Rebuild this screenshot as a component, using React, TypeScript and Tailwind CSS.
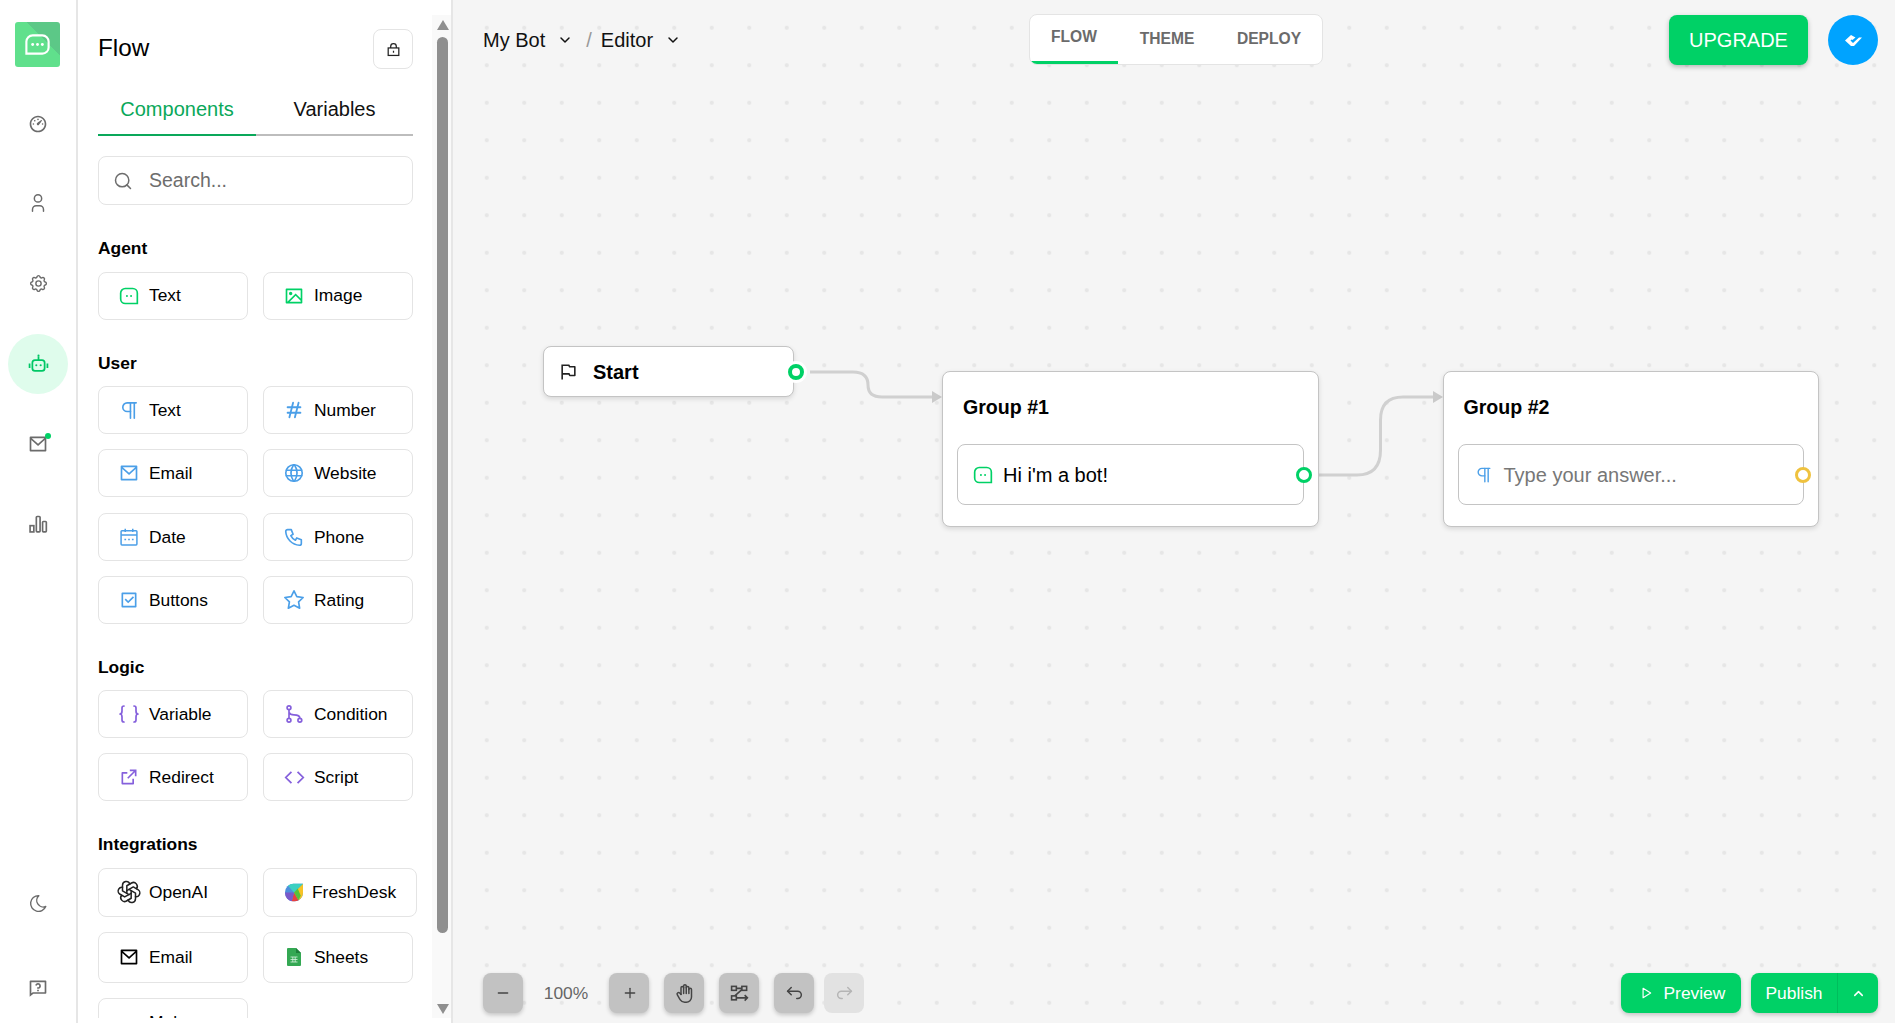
import type { ReactNode } from "react";
import { Pilcrow, Search } from "lucide-react";
import {
  RiCheckboxLine,
  RiDashboard3Line,
  RiExternalLinkLine,
  RiFlagLine,
  RiImageLine,
  RiMailLine,
  RiQuestionnaireLine,
} from "react-icons/ri";
import {
  TbArrowBackUp,
  TbArrowForwardUp,
  TbBraces,
  TbBrandOpenai,
  TbChevronDown,
  TbChevronUp,
  TbHandStop,
  TbHash,
  TbMinus,
  TbMoon,
  TbPhone,
  TbPlayerPlay,
  TbPlus,
  TbSettings,
  TbStar,
  TbUser,
  TbWorld,
} from "react-icons/tb";

function Bubble({ className }: { className?: string }) {
  return (
    <svg viewBox="0 0 24 24" fill="none" stroke="currentColor" strokeWidth="2" className={className}>
      <path d="M7.500 3h9a5.500 5.500 0 0 1 5.500 5.500V21H7.500A5.500 5.500 0 0 1 2 15.500V8.500A5.500 5.500 0 0 1 7.500 3z" />
      <circle cx="9.500" cy="12" r="1.200" fill="currentColor" stroke="none" />
      <circle cx="14.500" cy="12" r="1.200" fill="currentColor" stroke="none" />
    </svg>
  );
}

function Robot({ className }: { className?: string }) {
  return (
    <svg viewBox="0 0 24 24" fill="none" stroke="currentColor" strokeWidth="2" className={className}>
      <rect x="5" y="8" width="14" height="12.500" rx="3" />
      <path d="M12 8V4M1.800 12v5M22.200 12v5" />
      <circle cx="12" cy="3" r="1.200" fill="currentColor" stroke="none" />
      <circle cx="9.500" cy="14" r="1.200" fill="currentColor" stroke="none" />
      <circle cx="14.500" cy="14" r="1.200" fill="currentColor" stroke="none" />
    </svg>
  );
}

function BarsIcon({ className }: { className?: string }) {
  return (
    <svg viewBox="0 0 24 24" fill="none" stroke="currentColor" strokeWidth="2" className={className}>
      <rect x="2.500" y="14" width="4.500" height="7.500" />
      <rect x="10" y="3" width="4.500" height="18.500" rx="1" />
      <rect x="17.500" y="9" width="4.500" height="12.500" rx="1" />
    </svg>
  );
}

function CalendarIcon({ className }: { className?: string }) {
  return (
    <svg viewBox="0 0 24 24" fill="none" stroke="currentColor" strokeWidth="1.800" className={className}>
      <rect x="2.500" y="4.500" width="19" height="17" rx="1" />
      <path d="M2.500 9.500h19M7.500 2v4M16.500 2v4" />
      <path d="M6.500 15h2M11 15h2M15.500 15h2" strokeWidth="1.600" />
    </svg>
  );
}

function ConditionIcon({ className }: { className?: string }) {
  return (
    <svg viewBox="0 0 24 24" fill="none" stroke="currentColor" strokeWidth="2" className={className}>
      <circle cx="6" cy="4.500" r="2.300" />
      <circle cx="6" cy="19.500" r="2.300" />
      <circle cx="19" cy="19.500" r="2.300" />
      <path d="M6 7v10M6 10c1 2.500 3 3 6 3 3.500 0 7 0 7 4" />
    </svg>
  );
}

function ChevronsCode({ className }: { className?: string }) {
  return (
    <svg viewBox="0 0 24 24" fill="none" stroke="currentColor" strokeWidth="2" className={className}>
      <path d="M8.500 5.500L2 12l6.500 6.500M15.500 5.500L22 12l-6.500 6.500" />
    </svg>
  );
}

function LockIcon({ className }: { className?: string }) {
  return (
    <svg viewBox="0 0 24 24" fill="none" stroke="currentColor" strokeWidth="2" className={className}>
      <rect x="3.500" y="9.500" width="17" height="12" />
      <path d="M7.500 9.500V7a4.500 4.500 0 0 1 9 0v2.500M12 14v3" />
    </svg>
  );
}

function FreshDesk() {
  return (
    <svg viewBox="0 0 24 24" className="h-[19px] w-[18px] shrink-0" preserveAspectRatio="none">
      <path d="M11 1h13v11a11 11 0 0 1-11 11H11A11 11 0 0 1 0 12a11 11 0 0 1 11-11z" fill="#4d8fdc" />
      <path d="M12 12L24 1v11a11 11 0 0 1-6 9.800z" fill="#f7c325" />
      <path d="M12 12l6 9.800A11 11 0 0 1 13 23H9z" fill="#e8403f" />
      <path d="M12 12L24 1H11a11 11 0 0 0-7 2.600z" fill="#3bd0c2" />
      <path d="M12 12l5-5 4 9-3 5.800z" fill="#56c23b" />
      <path d="M12 12L0 12a11 11 0 0 0 9 11z" fill="#7a59c9" />
    </svg>
  );
}

function SheetsIcon() {
  return (
    <svg viewBox="0 0 14 18" className="h-[18px] w-[14px] shrink-0">
      <path d="M1 0h8l5 5v12a1 1 0 0 1-1 1H1a1 1 0 0 1-1-1V1a1 1 0 0 1 1-1z" fill="#34a853" />
      <path d="M9 0l5 5H9z" fill="#1e7e3a" />
      <path d="M3.500 9h7M3.500 11.500h7M3.500 14h7M5.800 9v5M8.200 9v5" stroke="#d8f2df" strokeWidth="0.800" fill="none" />
    </svg>
  );
}

function RouteIcon({ className }: { className?: string }) {
  return (
    <svg viewBox="0 0 24 24" fill="none" stroke="currentColor" strokeWidth="2" className={className}>
      <rect x="2" y="3" width="6" height="5" />
      <rect x="15" y="3" width="6" height="5" />
      <rect x="2" y="15" width="6" height="5" />
      <path d="M8 5.500h7M15 7l-9 8M8 17.500h14M18.500 14l3.500 3.500-3.500 3.500" />
    </svg>
  );
}

function RailItem({ children, active }: { children: ReactNode; active?: boolean }) {
  return (
    <div className="flex h-[80px] items-center justify-center">
      <div className={`relative flex h-[60px] w-[60px] items-center justify-center rounded-full ${active ? "bg-[#dffcec] text-[#00c765]" : "text-[#6b6b6b]"}`}>
        {children}
      </div>
    </div>
  );
}

function Tool({ label, icon, size = "h-[48px] w-full", gap = "gap-[10px]" }: { label: string; icon: ReactNode; size?: string; gap?: string }) {
  return (
    <div className={`flex items-center rounded-lg border border-[#e4e4e4] bg-white pl-[20px] text-[17.4px] text-black ${size} ${gap}`}>
      <span className="flex w-[20px] shrink-0 items-center justify-center">{icon}</span>
      <span>{label}</span>
    </div>
  );
}

const green = "h-[20px] w-[20px] shrink-0 text-[#00d166]";
const blue = "h-[20px] w-[20px] shrink-0 text-[#4b9fe8]";
const blueBig = "h-[22px] w-[22px] shrink-0 text-[#4b9fe8]";
const purple = "h-[20px] w-[20px] shrink-0 text-[#8560dc]";

function Group({ title, rowGap = "gap-y-[15px]", children }: { title: string; rowGap?: string; children: ReactNode }) {
  return (
    <div className="mb-[31px] last:mb-0">
      <h3 className="mb-[11.5px] text-[17.4px] leading-[24px] font-bold text-black">{title}</h3>
      <div className={`grid grid-cols-[150px_150px] gap-x-[15px] ${rowGap}`}>{children}</div>
    </div>
  );
}

function ToolbarButton({ children, faded }: { children: ReactNode; faded?: boolean }) {
  return (
    <div className={`flex h-[40px] w-[40px] items-center justify-center rounded-lg ${faded ? "bg-[#e2e2e2] text-[#b5b5b5]" : "bg-[#c2c2c2] text-[#444] shadow-[0_2px_4px_rgba(0,0,0,0.2)]"}`}>
      {children}
    </div>
  );
}

function Port({ color }: { color: string }) {
  return <span className={`absolute top-1/2 right-[-8.5px] h-[16px] w-[16px] -translate-y-1/2 rounded-full border-[3.5px] bg-white ${color}`} />;
}

export default function App() {
  return (
    <div className="flex h-screen w-full overflow-hidden bg-white font-['Liberation_Sans',Arial,sans-serif]">
      <aside className="flex h-full w-[78px] shrink-0 flex-col border-r-2 border-[#e6e6e6] pt-[22px]">
        <div className="mx-[15px] flex h-[45px] w-[45px] items-center justify-center rounded-[3px] bg-[linear-gradient(to_top_right,#60e08c_0,#60e08c_62.5%,#5cc887_62.5%)]">
          <svg viewBox="0 0 30 30" className="h-[29px] w-[29px]" fill="none" stroke="white" strokeWidth="2.200">
            <path d="M10 3.500h10a6.500 6.500 0 0 1 6.500 6.500v6a6.500 6.500 0 0 1-6.500 6.500H3.500V10A6.500 6.500 0 0 1 10 3.500z" transform="translate(0 2)" />
            <circle cx="10" cy="15" r="1.500" fill="white" stroke="none" />
            <circle cx="15" cy="15" r="1.500" fill="white" stroke="none" />
            <circle cx="20" cy="15" r="1.500" fill="white" stroke="none" />
          </svg>
        </div>
        <div className="mt-[17px] flex flex-col">
          <RailItem><RiDashboard3Line className="h-[20px] w-[20px]" /></RailItem>
          <RailItem><TbUser className="mb-[2px] h-[22px] w-[22px]" strokeWidth={1.6} /></RailItem>
          <RailItem><TbSettings className="mb-[2px] h-[21px] w-[21px]" strokeWidth={1.6} /></RailItem>
          <RailItem active><Robot className="mb-[2px] h-[21px] w-[21px]" /></RailItem>
          <RailItem>
            <RiMailLine className="h-[20px] w-[20px]" />
            <span className="absolute top-[19px] right-[17px] h-[6px] w-[6px] rounded-full bg-[#00d166]" />
          </RailItem>
          <RailItem><BarsIcon className="h-[20px] w-[20px]" /></RailItem>
        </div>
        <div className="mt-auto mb-[-5px] flex flex-col gap-[5px]">
          <RailItem><TbMoon className="h-[21px] w-[21px]" strokeWidth={1.6} /></RailItem>
          <RailItem><RiQuestionnaireLine className="h-[20px] w-[20px]" /></RailItem>
        </div>
      </aside>

      <section className="flex h-full w-[375px] shrink-0 border-r-2 border-[#e6e6e6]">
        <div className="h-[1018px] w-[354px] shrink-0 self-start overflow-hidden pt-[29px] pl-[20px]">
          <div className="w-[315px]">
            <div className="flex h-[40px] items-center justify-between">
              <h1 className="pb-[2px] text-[24.3px] text-black">Flow</h1>
              <div className="flex h-[40px] w-[40px] items-center justify-center rounded-lg border border-[#e4e4e4] text-[#222]">
                <LockIcon className="h-[15px] w-[15px]" />
              </div>
            </div>
            <div className="mt-[16px] flex h-[51px] border-b-2 border-[#bdbdbd] text-[20px]">
              <div className="mb-[-2px] flex w-[158px] items-center justify-center border-b-2 border-[#0aa85a] pb-[2px] text-[#0aa85a]">Components</div>
              <div className="flex flex-1 items-center justify-center pb-[2px] text-[#111]">Variables</div>
            </div>
            <div className="mt-[20px] flex h-[49px] items-center gap-[16px] rounded-lg border border-[#e4e4e4] pl-[14px] text-[19.5px] text-[#6d6d6d]">
              <Search className="h-[20px] w-[20px]" strokeWidth={1.8} />
              <span>Search...</span>
            </div>
            <div className="mt-[31px]">
              <Group title="Agent">
                <Tool label="Text" icon={<Bubble className={green} />} />
                <Tool label="Image" icon={<RiImageLine className={green} />} />
              </Group>
              <Group title="User" rowGap="gap-y-[15.3px]">
                <Tool label="Text" icon={<Pilcrow className="h-[23px] w-[23px] shrink-0 text-[#4b9fe8]" strokeWidth={1.7} />} />
                <Tool label="Number" icon={<TbHash className={blueBig} />} />
                <Tool label="Email" icon={<RiMailLine className={blue} />} />
                <Tool label="Website" icon={<TbWorld className={blueBig} strokeWidth={1.8} />} />
                <Tool label="Date" icon={<CalendarIcon className={blue} />} />
                <Tool label="Phone" icon={<TbPhone className={blueBig} strokeWidth={1.8} />} />
                <Tool label="Buttons" icon={<RiCheckboxLine className={blue} />} />
                <Tool label="Rating" icon={<TbStar className={blueBig} strokeWidth={1.8} />} />
              </Group>
              <Group title="Logic">
                <Tool label="Variable" icon={<TbBraces className="h-[24px] w-[24px] shrink-0 text-[#8560dc]" strokeWidth={1.7} />} />
                <Tool label="Condition" icon={<ConditionIcon className={purple} />} />
                <Tool label="Redirect" icon={<RiExternalLinkLine className={purple} />} />
                <Tool label="Script" icon={<ChevronsCode className="h-[21px] w-[21px] shrink-0 text-[#8560dc]" />} />
              </Group>
              <Group title="Integrations">
                <Tool label="OpenAI" size="h-[49px] w-full" icon={<TbBrandOpenai className="h-[26px] w-[26px] shrink-0 text-[#222]" strokeWidth={1.4} />} />
                <Tool label="FreshDesk" size="h-[49px] w-[154px]" gap="gap-[8px]" icon={<FreshDesk />} />
                <Tool label="Email" size="h-[51px] w-full" icon={<RiMailLine className="h-[20px] w-[20px] text-black" />} />
                <Tool label="Sheets" size="h-[51px] w-full" icon={<SheetsIcon />} />
                <Tool label="Make" icon={<span />} />
              </Group>
            </div>
          </div>
        </div>
        <div className="mt-[15px] mb-[5px] flex w-[19px] shrink-0 flex-col items-center bg-[#f9f9f9] pt-[5px] pl-[2px]">
          <span className="h-0 w-0 border-x-[6px] border-b-[10px] border-x-transparent border-b-[#8f8f8f]" />
          <span className="mt-[7px] h-[896px] w-[11px] rounded-full bg-[#8f8f8f]" />
          <span className="mt-[71px] h-0 w-0 border-x-[6px] border-t-[10px] border-x-transparent border-t-[#8f8f8f]" />
        </div>
      </section>

      <main className="relative flex h-full flex-1 flex-col justify-between bg-[#f5f5f5] bg-[radial-gradient(#e6e6e6_1.9px,transparent_2.2px)] bg-[length:37.5px_37.5px] bg-[position:15px_9px] pt-[15px] pr-[17px] pb-[10px] pl-[30px]">
        <svg className="absolute inset-0 h-full w-full" fill="none">
          <path d="M357 372H400Q415 372 415 385Q415 397 429 397H482" stroke="#d0d0d0" strokeWidth="3" />
          <path d="M489 397L479 391V403Z" fill="#cacaca" />
          <path d="M865 475H904Q927.500 475 927.500 450V420Q927.500 397 950 397H983" stroke="#d0d0d0" strokeWidth="3" />
          <path d="M990 397L980 391V403Z" fill="#cacaca" />
        </svg>

        <div className="absolute top-[346px] left-[90px] flex h-[51px] w-[251px] items-center gap-[15px] rounded-lg border border-[#c4c4c4] bg-white pl-[15px] shadow-[0_2px_5px_rgba(0,0,0,0.12)]">
          <RiFlagLine className="h-[19px] w-[19px] text-[#222]" />
          <span className="text-[20px] font-bold text-black">Start</span>
          <span className="absolute top-1/2 right-[-14px] flex h-[22px] w-[22px] -translate-y-1/2 items-center justify-center rounded-full bg-white">
            <span className="h-[16px] w-[16px] rounded-full border-4 border-[#00d166] bg-white" />
          </span>
        </div>

        <div className="absolute top-[371px] left-[489px] h-[156px] w-[377px] rounded-lg border border-[#c4c4c4] bg-white px-[14px] shadow-[0_2px_5px_rgba(0,0,0,0.12)]">
          <h2 className="h-[72px] pt-[23px] pl-[6px] text-[19.6px] leading-[24px] font-bold text-black">Group #1</h2>
          <div className="relative flex h-[61px] items-center gap-[10px] rounded-lg border border-[#c4c4c4] pl-[15px] text-[20px] text-black">
            <Bubble className="h-[20px] w-[20px] text-[#00d166]" />
            <span>Hi i'm a bot!</span>
            <Port color="border-[#00d166]" />
          </div>
        </div>

        <div className="absolute top-[371px] left-[989.5px] h-[156px] w-[376px] rounded-lg border border-[#c4c4c4] bg-white px-[14px] shadow-[0_2px_5px_rgba(0,0,0,0.12)]">
          <h2 className="h-[72px] pt-[23px] pl-[6px] text-[19.6px] leading-[24px] font-bold text-black">Group #2</h2>
          <div className="relative flex h-[61px] items-center gap-[10px] rounded-lg border border-[#c4c4c4] pl-[15px] text-[20px] text-[#777]">
            <Pilcrow className="h-[20px] w-[20px] text-[#4b9fe8]" strokeWidth={1.7} />
            <span>Type your answer...</span>
            <Port color="border-[#efc23f]" />
          </div>
        </div>

        <header className="relative flex items-start">
          <div className="flex h-[50px] w-[546px] shrink-0 items-center text-[20px] text-[#111]">
            <span>My Bot</span>
            <TbChevronDown className="ml-[12px] h-[16px] w-[16px]" strokeWidth={2.2} />
            <span className="mr-[9px] ml-[13px] text-[#999]">/</span>
            <span>Editor</span>
            <TbChevronDown className="ml-[12px] h-[16px] w-[16px]" strokeWidth={2.2} />
          </div>
          <div className="-mt-[1px] flex h-[51px] w-[294px] shrink-0 overflow-hidden rounded-lg border border-[#e4e4e4] bg-white text-[15.6px] font-bold text-[#6b6b6b]">
            <div className="flex w-[88px] items-center justify-center border-b-[3px] border-[#00d166] pb-[2px]">FLOW</div>
            <div className="flex w-[98px] items-center justify-center pb-[1px]">THEME</div>
            <div className="flex flex-1 items-center justify-center pb-[1px]">DEPLOY</div>
          </div>
          <button className="ml-auto flex h-[50px] w-[139px] items-center justify-center rounded-lg bg-[#00d166] text-[20px] text-white shadow-[0_2px_5px_rgba(0,0,0,0.25)]">UPGRADE</button>
          <div className="ml-[20px] flex h-[50px] w-[50px] items-center justify-center rounded-full bg-[#00a3ff]">
            <svg viewBox="0 0 17 11" className="h-[11px] w-[17px]" fill="white">
              <path d="M0 5.500L6 0l4.500 2.500L7.500 5l-1-.5-1 1L8 8l6-5.500h3L9 11H6z" />
            </svg>
          </div>
        </header>

        <footer className="relative flex items-center justify-between">
          <div className="flex items-center">
            <ToolbarButton><TbMinus className="h-[16px] w-[16px]" /></ToolbarButton>
            <span className="w-[86px] text-center text-[17.4px] text-[#666]">100%</span>
            <ToolbarButton><TbPlus className="ml-[1px] h-[16px] w-[16px]" /></ToolbarButton>
            <div className="ml-[15px] flex gap-[15px]">
              <ToolbarButton><TbHandStop className="h-[21px] w-[21px]" strokeWidth={1.7} /></ToolbarButton>
              <ToolbarButton><RouteIcon className="h-[19px] w-[19px]" /></ToolbarButton>
              <ToolbarButton><TbArrowBackUp className="h-[22px] w-[22px]" strokeWidth={1.6} /></ToolbarButton>
            </div>
            <div className="ml-[10px]">
              <ToolbarButton faded><TbArrowForwardUp className="ml-[1px] h-[22px] w-[22px]" strokeWidth={1.6} /></ToolbarButton>
            </div>
          </div>
          <div className="flex items-center gap-[10px] text-[17.4px] text-white">
            <button className="flex h-[40px] w-[120px] items-center gap-[10.5px] rounded-lg bg-[#00d166] pl-[18px] shadow-[0_2px_4px_rgba(0,0,0,0.2)]">
              <TbPlayerPlay className="h-[14px] w-[14px]" strokeWidth={2} />
              <span>Preview</span>
            </button>
            <div className="flex h-[40px] w-[127px] items-center rounded-lg bg-[#00d166] shadow-[0_2px_4px_rgba(0,0,0,0.2)]">
              <span className="w-[86px] text-center">Publish</span>
              <span className="flex h-full flex-1 items-center justify-center border-l border-[#00bd5c]">
                <TbChevronUp className="h-[15px] w-[15px]" strokeWidth={2.4} />
              </span>
            </div>
          </div>
        </footer>
      </main>
    </div>
  );
}
